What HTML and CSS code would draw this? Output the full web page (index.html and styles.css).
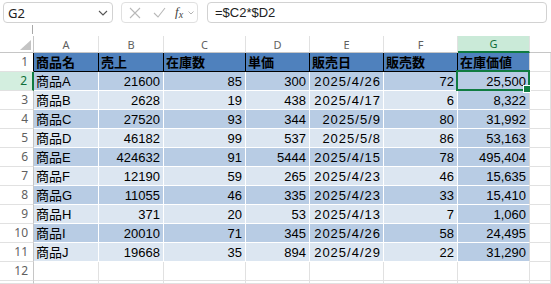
FILE: index.html
```html
<!DOCTYPE html>
<html lang="ja">
<head>
<meta charset="utf-8">
<link rel="stylesheet" href="styles.css">
</head>
<body>
<div class="topbar">
  <div class="bar-row">
    <div class="namebox"><span>G2</span>
      <svg class="chev" width="10" height="6" viewBox="0 0 10 6"><path d="M1 1l4 4 4-4" fill="none" stroke="#555" stroke-width="1.1"/></svg>
    </div>
    <div class="btns">
      <svg width="12" height="12" viewBox="0 0 12 12"><path d="M1 1l10 10M11 1L1 11" stroke="#b8b8b8" stroke-width="1.1" fill="none"/></svg>
      <svg width="13" height="11" viewBox="0 0 13 11"><path d="M1 6l4 4 7-9" stroke="#b8b8b8" stroke-width="1.1" fill="none"/></svg>
      <span class="fx">f<sub>x</sub></span>
      <svg width="6" height="4" viewBox="0 0 6 4"><path d="M0.5 0.5l2.5 2.5 2.5-2.5" stroke="#aaa" stroke-width="0.9" fill="none"/></svg>
    </div>
    <div class="formula">=$C2*$D2</div>
  </div>
  <div class="grip"></div>
</div>
<div class="sheet">
  <div class="c corner"><svg width="11" height="10" viewBox="0 0 11 10"><path d="M11 0V10H0Z" fill="#c4c4c4"/></svg></div>
  <div class="c hd">A</div><div class="c hd">B</div><div class="c hd">C</div><div class="c hd">D</div><div class="c hd">E</div><div class="c hd">F</div><div class="c hd hd-sel">G</div><div class="c hd hd-last"></div>

  <div class="c rh rh-top">1</div>
  <div class="c th">商品名</div><div class="c th">売上</div><div class="c th">在庫数</div><div class="c th">単価</div><div class="c th">販売日</div><div class="c th">販売数</div><div class="c th th-last">在庫価値</div><div class="c e"></div>

  <div class="c rh rh-sel">2</div>
  <div class="c dk">商品A</div><div class="c dk n">21600</div><div class="c dk n">85</div><div class="c dk n">300</div><div class="c dk n date">2025/4/26</div><div class="c dk n">72</div><div class="c dk n g sel">25,500</div><div class="c e"></div>

  <div class="c rh">3</div>
  <div class="c lt">商品B</div><div class="c lt n">2628</div><div class="c lt n">19</div><div class="c lt n">438</div><div class="c lt n date">2025/4/17</div><div class="c lt n">6</div><div class="c dk n g">8,322</div><div class="c e"></div>

  <div class="c rh">4</div>
  <div class="c dk">商品C</div><div class="c dk n">27520</div><div class="c dk n">93</div><div class="c dk n">344</div><div class="c dk n date">2025/5/9</div><div class="c dk n">80</div><div class="c dk n g">31,992</div><div class="c e"></div>

  <div class="c rh">5</div>
  <div class="c lt">商品D</div><div class="c lt n">46182</div><div class="c lt n">99</div><div class="c lt n">537</div><div class="c lt n date">2025/5/8</div><div class="c lt n">86</div><div class="c dk n g">53,163</div><div class="c e"></div>

  <div class="c rh">6</div>
  <div class="c dk">商品E</div><div class="c dk n">424632</div><div class="c dk n">91</div><div class="c dk n">5444</div><div class="c dk n date">2025/4/15</div><div class="c dk n">78</div><div class="c dk n g">495,404</div><div class="c e"></div>

  <div class="c rh">7</div>
  <div class="c lt">商品F</div><div class="c lt n">12190</div><div class="c lt n">59</div><div class="c lt n">265</div><div class="c lt n date">2025/4/23</div><div class="c lt n">46</div><div class="c dk n g">15,635</div><div class="c e"></div>

  <div class="c rh">8</div>
  <div class="c dk">商品G</div><div class="c dk n">11055</div><div class="c dk n">46</div><div class="c dk n">335</div><div class="c dk n date">2025/4/23</div><div class="c dk n">33</div><div class="c dk n g">15,410</div><div class="c e"></div>

  <div class="c rh">9</div>
  <div class="c lt">商品H</div><div class="c lt n">371</div><div class="c lt n">20</div><div class="c lt n">53</div><div class="c lt n date">2025/4/13</div><div class="c lt n">7</div><div class="c dk n g">1,060</div><div class="c e"></div>

  <div class="c rh">10</div>
  <div class="c dk">商品I</div><div class="c dk n">20010</div><div class="c dk n">71</div><div class="c dk n">345</div><div class="c dk n date">2025/4/26</div><div class="c dk n">58</div><div class="c dk n g">24,495</div><div class="c e"></div>

  <div class="c rh">11</div>
  <div class="c lt">商品J</div><div class="c lt n">19668</div><div class="c lt n">35</div><div class="c lt n">894</div><div class="c lt n date">2025/4/29</div><div class="c lt n">22</div><div class="c dk n g">31,290</div><div class="c e"></div>

  <div class="c rh">12</div>
  <div class="c e"></div><div class="c e"></div><div class="c e"></div><div class="c e"></div><div class="c e"></div><div class="c e"></div><div class="c e"></div><div class="c e"></div>

  <div class="c rh"></div>
  <div class="c e"></div><div class="c e"></div><div class="c e"></div><div class="c e"></div><div class="c e"></div><div class="c e"></div><div class="c e"></div><div class="c e"></div>
</div>
</body>
</html>
```
FILE: styles.css
```css
* { box-sizing: border-box; }
body {
  margin: 0;
  width: 551px;
  height: 284px;
  overflow: hidden;
  background: #fff;
  font-family: "Liberation Sans", "Noto Sans CJK JP", sans-serif;
  color: #000;
}
.topbar {
  height: 36px;
  display: flex;
  flex-direction: column;
}
.bar-row {
  display: flex;
  padding-top: 2px;
  height: 24px;
}
.namebox {
  margin-left: 3px;
  width: 110px;
  height: 21px;
  border: 1px solid #d2d2d2;
  border-radius: 4px;
  display: flex;
  align-items: center;
  justify-content: space-between;
  padding: 0 4px 0 4px;
  font-family: "Noto Sans", sans-serif;
  font-size: 13px;
  color: #222;
}
.btns {
  margin-left: 8px;
  width: 77px;
  height: 21px;
  border: 1px solid #e0e0e0;
  border-radius: 4px;
  display: flex;
  align-items: center;
  padding-left: 7px;
  gap: 0;
}
.btns svg:nth-child(1) { margin-right: 12px; }
.btns svg:nth-child(2) { margin-right: 9px; }
.fx {
  font-family: "Liberation Serif", serif;
  font-style: italic;
  font-size: 13px;
  color: #444;
  margin-right: 5px;
  line-height: 1;
}
.fx sub { font-size: 10px; vertical-align: -2px; }
.formula {
  margin-left: 9px;
  margin-right: 4px;
  flex: 1;
  height: 21px;
  border: 1px solid #d2d2d2;
  border-radius: 4px;
  display: flex;
  align-items: center;
  padding-left: 7px;
  font-size: 13px;
  color: #222;
}
.grip {
  margin-left: 32px;
  margin-top: 1px;
  width: 1px;
  height: 9px;
  background: #a8a8a8;
}
.sheet {
  display: grid;
  grid-template-columns: 34px 65px 65px 82px 64px 74px 74px 72px 1fr;
  grid-template-rows: 17px repeat(12, 19px) 3px;
}
.c {
  border-right: 1px solid #e1e1e1;
  border-bottom: 1px solid #e1e1e1;
  display: flex;
  align-items: center;
  padding: 0 3px 0 2px;
  white-space: nowrap;
  font-size: 13px;
  line-height: 1;
}
.corner {
  justify-content: flex-end;
  align-items: flex-end;
  padding: 0 2px 2px 0;
  border-bottom-color: #c6c6c6;
  border-right-color: #c6c6c6;
}
.hd {
  justify-content: center;
  font-family: "Noto Sans", sans-serif;
  font-size: 11px;
  color: #5f5f5f;
  border-bottom-color: #c6c6c6;
  padding: 0;
}
.hd-sel {
  background: #caead8;
  color: #0e6e39;
  border-bottom: 2px solid #107c41;
}
.hd-last { border-right: none; }
.rh {
  justify-content: flex-end;
  padding-right: 5px;
  font-family: "Noto Sans", sans-serif;
  font-size: 12px;
  color: #5f5f5f;
  border-right-color: #c6c6c6;
}
.rh-top { border-right-color: #000; }
.rh-sel {
  background: #d3eedf;
  color: #0e6e39;
  border-right: 2px solid #107c41;
}
.th {
  background: #4f81bd;
  font-weight: bold;
  border-right-color: #000;
  border-bottom-color: #000;
}
.th-last { border-right-color: #d6d6d6; }
.dk {
  background: #b8cce4;
  border-right-color: #fff;
  border-bottom-color: #fff;
}
.lt {
  background: #dce6f1;
  border-right-color: #fff;
  border-bottom-color: #fff;
}
.g { border-right-color: #d6d6d6; }
.n { justify-content: flex-end; }
.date { letter-spacing: 1px; padding-right: 2px; }
.e { background: #fff; }
.sel { position: relative; }
.sel::after {
  content: "";
  position: absolute;
  left: -2px;
  top: -2px;
  right: -1px;
  bottom: -1px;
  border: 2px solid #107c41;
  z-index: 2;
}
.sel::before {
  content: "";
  position: absolute;
  right: -2px;
  bottom: -3px;
  width: 6px;
  height: 6px;
  background: #107c41;
  border: 1px solid #fff;
  z-index: 3;
}
```
